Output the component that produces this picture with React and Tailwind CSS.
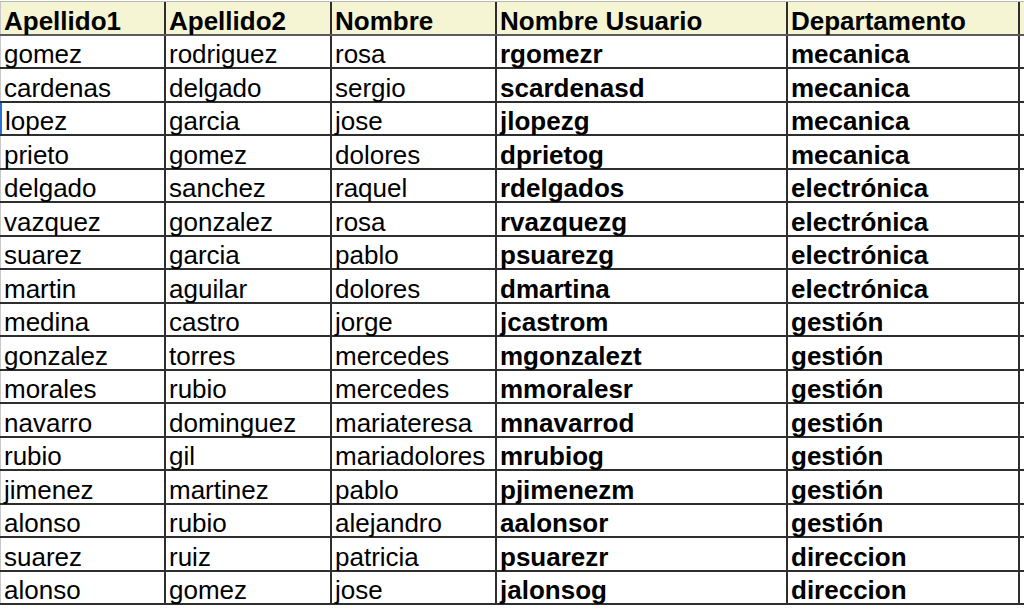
const headers = ["Apellido1", "Apellido2", "Nombre", "Nombre Usuario", "Departamento"];

const rows = [
  ["gomez", "rodriguez", "rosa", "rgomezr", "mecanica"],
  ["cardenas", "delgado", "sergio", "scardenasd", "mecanica"],
  ["lopez", "garcia", "jose", "jlopezg", "mecanica"],
  ["prieto", "gomez", "dolores", "dprietog", "mecanica"],
  ["delgado", "sanchez", "raquel", "rdelgados", "electrónica"],
  ["vazquez", "gonzalez", "rosa", "rvazquezg", "electrónica"],
  ["suarez", "garcia", "pablo", "psuarezg", "electrónica"],
  ["martin", "aguilar", "dolores", "dmartina", "electrónica"],
  ["medina", "castro", "jorge", "jcastrom", "gestión"],
  ["gonzalez", "torres", "mercedes", "mgonzalezt", "gestión"],
  ["morales", "rubio", "mercedes", "mmoralesr", "gestión"],
  ["navarro", "dominguez", "mariateresa", "mnavarrod", "gestión"],
  ["rubio", "gil", "mariadolores", "mrubiog", "gestión"],
  ["jimenez", "martinez", "pablo", "pjimenezm", "gestión"],
  ["alonso", "rubio", "alejandro", "aalonsor", "gestión"],
  ["suarez", "ruiz", "patricia", "psuarezr", "direccion"],
  ["alonso", "gomez", "jose", "jalonsog", "direccion"],
];

const widths = ["w-[166px]", "w-[166px]", "w-[165px]", "w-[291px]", "w-[232px]"];

const Cell = ({ i, bold, children, cursor }) => (
  <div
    className={`${widths[i]} shrink-0 flex items-end pl-[3px] whitespace-nowrap border-r-2 border-[#2e2e2e] ${
      i === 0 ? (cursor ? "border-l-2 border-l-[#2a6fd6]" : "border-l border-l-[#c8c8c8]") : ""
    } ${bold ? "font-bold" : ""}`}
  >
    <span className="leading-[30px] -mb-[2px]">{children}</span>
  </div>
);

const App = () => {
  return (
    <div
      className="w-[1024px] h-[610px] bg-white overflow-hidden pt-px text-[26px] text-black"
      style={{ fontFamily: '"Liberation Sans", Arial, sans-serif' }}
    >
      <div className="flex h-[34.5px] bg-[#f5f5d4] border-t border-[#b8b8b8] border-b-2 border-b-[#5a5a5a] font-bold">
        {headers.map((h, i) => (
          <Cell key={h} i={i} bold>
            {h}
          </Cell>
        ))}
      </div>
      {rows.map((row, r) => (
        <div key={r} className="flex h-[33.5px] border-b-2 border-[#2e2e2e]">
          {row.map((v, i) => (
            <Cell key={i} i={i} bold={i >= 3} cursor={r === 2}>
              {v}
            </Cell>
          ))}
        </div>
      ))}
    </div>
  );
};

export default App;
